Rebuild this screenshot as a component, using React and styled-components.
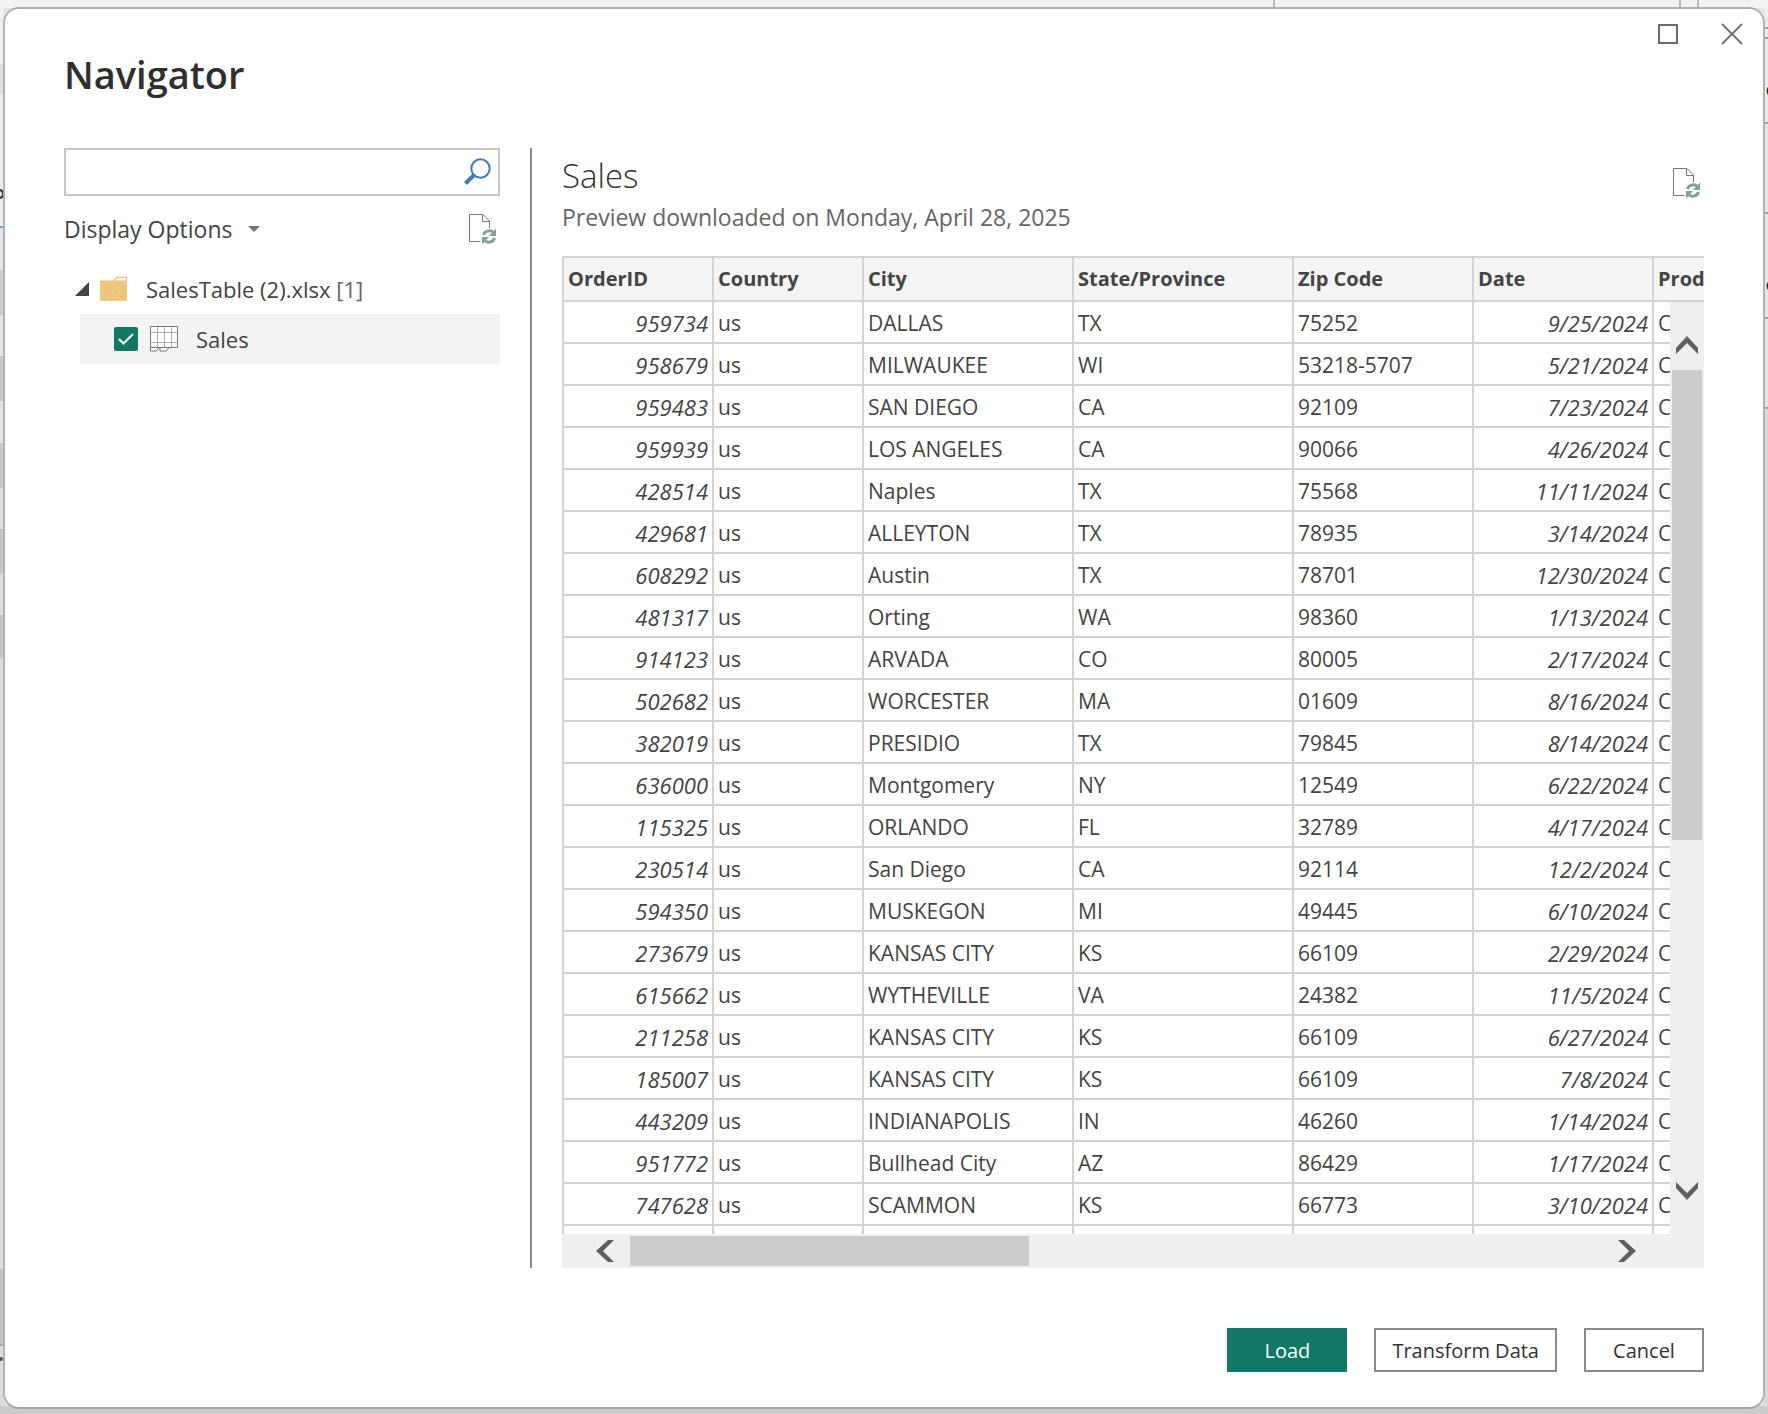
import React, { useState } from "react";
import styled, { createGlobalStyle } from "styled-components";

const GlobalStyle = createGlobalStyle`
  *, *::before, *::after { box-sizing: border-box; }
  body {
    margin: 0;
    background: #e4e4e4;
    color: #444444;
    font-family: "Open Sans", "Noto Sans", sans-serif;
    font-size: 22px;
    line-height: 30px;
  }
  button, input { font: inherit; color: inherit; }
`;

const Page = styled.div`
  position: relative;
  min-height: 100vh;
  display: flex;
  padding: 7px 3px 5px;
  overflow: hidden;
`;

/* The window behind the dialog, seen only as a thin rim */
const Backdrop = styled.div`
  position: absolute;
  inset: 0;
  display: flex;
  flex-direction: column;
`;

const TopRim = styled.div`
  display: flex;
  justify-content: flex-end;
  height: 8px;
  background: #f3f3f3;
`;

const RimCell = styled.div`
  width: ${(p) => p.$width}px;
  border-left: 2px solid #b8b8b8;
`;

const SideRims = styled.div`
  flex: 1;
  display: flex;
  justify-content: space-between;
`;

const LeftRim = styled.div`
  width: 4px;
  background: linear-gradient(
    #efefef 56px, #e0e0e0 56px 86px, #ececec 86px 218px, #6aa5dc 218px 220px,
    #e6e6e6 220px 262px, #cccccc 262px 307px, #e4e4e4 307px 348px,
    #c9c9c9 348px 393px, #e2e2e2 393px 435px, #c8c8c8 435px 480px,
    #e0e0e0 480px 521px, #c6c6c6 521px 566px, #dedede 566px 607px,
    #c6c6c6 607px 650px, #dcdcdc 650px 1261px, #c4c4c4 1261px 1336px,
    #a8a8a8 1336px 1338px, #dcdcdc 1338px
  );
`;

const RightRim = styled.div`
  width: 4px;
  background: linear-gradient(
    #ececec 19px, #a0a0a0 19px 21px, #ececec 21px 29px, #a0a0a0 29px 31px,
    #ebebeb 31px 114px, #a0a0a0 114px 116px, #e8e8e8 116px 204px,
    #a0a0a0 204px 206px, #e6e6e6 206px 309px, #a0a0a0 309px 311px,
    #e4e4e4 311px 399px, #a0a0a0 399px 401px, #d8d8d8 401px
  );
`;

const RimMarks = styled.svg`
  display: block;
`;

const BottomRim = styled.div`
  height: 8px;
  background: #cbcbcb;
`;

const Dialog = styled.main`
  position: relative;
  flex: 1;
  min-width: 0;
  display: flex;
  flex-direction: column;
  padding: 0 59px 35px;
  background: #ffffff;
  border: 2px solid #b2b2b2;
  border-bottom-color: #a6a6a6;
  border-radius: 16px;
`;

const TitleBar = styled.header`
  display: flex;
  justify-content: space-between;
  align-items: flex-start;
  height: 139px;
`;

const Title = styled.h1`
  margin: 0;
  padding-top: 37px;
  font-size: 38px;
  line-height: 56px;
  font-weight: 600;
  color: #2f2f2f;
`;

const WindowButtons = styled.div`
  display: flex;
  gap: 24px;
  margin: 5px -48px 0 0;
`;

const IconButton = styled.button`
  display: grid;
  place-items: center;
  flex: none;
  width: ${(p) => p.$size}px;
  height: ${(p) => p.$size}px;
  padding: 0;
  border: 0;
  background: transparent;
`;

const Content = styled.div`
  flex: 1;
  min-height: 0;
  display: grid;
  grid-template-columns: 436px 62px minmax(0, 1fr);
`;

const Sidebar = styled.nav`
  display: flex;
  flex-direction: column;
`;

const Divider = styled.div`
  width: 2px;
  margin-left: 30px;
  background: #8a8a8a;
`;

const SearchBox = styled.div`
  display: flex;
  align-items: center;
  height: 48px;
  padding-right: 4px;
  border: 2px solid #c6c6c6;
`;

const SearchInput = styled.input`
  flex: 1;
  min-width: 0;
  height: 100%;
  padding: 0 8px;
  border: 0;
  outline: 0;
  background: transparent;
`;

const OptionsRow = styled.div`
  display: flex;
  justify-content: space-between;
  align-items: center;
  height: 66px;
  padding-right: 1px;
`;

const OptionsButton = styled.button`
  display: flex;
  align-items: center;
  gap: 16px;
  padding: 0;
  border: 0;
  background: transparent;
  font-size: 23px;
`;

const Tree = styled.ul`
  margin: 0;
  padding: 0;
  list-style: none;
`;

const FolderRow = styled.div`
  display: flex;
  align-items: center;
  height: 52px;
  padding: 2px 0 0 11px;
`;

const FolderName = styled.span`
  margin-left: 18px;
`;

const Count = styled.span`
  color: #666666;
`;

const TableRow = styled.label`
  display: flex;
  align-items: center;
  height: 50px;
  margin-left: 16px;
  padding-left: 34px;
  background: #f3f3f3;
`;

const CheckWrap = styled.span`
  display: grid;
  place-items: center;
  width: 24px;
  height: 24px;
  margin-right: 12px;

  > * { grid-area: 1 / 1; }
  > svg { pointer-events: none; }
`;

const Check = styled.input`
  appearance: none;
  width: 24px;
  height: 24px;
  margin: 0;
  border: 2px solid #117865;
  border-radius: 2px;

  &:checked { background: #117865; }
`;

const TableName = styled.span`
  margin-left: 18px;
`;

const Preview = styled.section`
  display: flex;
  flex-direction: column;
  min-width: 0;
`;

const PreviewHead = styled.div`
  display: flex;
  justify-content: space-between;
  height: 108px;
  padding-top: 5px;
`;

const PreviewTitle = styled.h2`
  margin: 0;
  font-size: 33px;
  line-height: 46px;
  font-weight: 300;
  color: #333333;
`;

const PreviewNote = styled.p`
  margin: 0;
  font-size: 23px;
  line-height: 36px;
  color: #666666;
`;

const RefreshSlot = styled.div`
  padding: 14px 1px 0 0;
`;

const GridFrame = styled.div`
  flex: 1;
  min-height: 0;
  display: grid;
  grid-template-columns: minmax(0, 1fr) 34px;
  grid-template-rows: 46px minmax(0, 1fr) 34px;
`;

const TableClip = styled.div`
  grid-column: 1 / -1;
  grid-row: 1 / 3;
  overflow: hidden;
  height: 0;
  min-height: 100%;
`;

const DataTable = styled.table`
  width: 1272px;
  table-layout: fixed;
  border-spacing: 0;
  border-top: 2px solid #d3d3d3;
  border-left: 2px solid #d3d3d3;
  font-size: 21px;
  line-height: 28px;
`;

const HeadCell = styled.th`
  height: 44px;
  padding: 0 4px;
  border-right: 2px solid #d3d3d3;
  border-bottom: 2px solid #d3d3d3;
  background: #f4f4f4;
  text-align: left;
  font-size: 20px;
  font-weight: 700;
  white-space: nowrap;
`;

const Cell = styled.td`
  height: 42px;
  padding: 2px 4px 0;
  border-right: 2px solid #d3d3d3;
  border-bottom: 2px solid #d3d3d3;
  text-align: ${(p) => (p.$numeric ? "right" : "left")};
  font-style: ${(p) => (p.$numeric ? "italic" : "normal")};
  font-size: ${(p) => (p.$numeric ? 22 : 21)}px;
  white-space: nowrap;
`;

const VScroll = styled.div`
  grid-column: 2;
  grid-row: 2 / 4;
  position: relative;
  display: flex;
  flex-direction: column;
  align-items: center;
  padding: 30px 0 64px;
  background: #efefef;
`;

const HScroll = styled.div`
  grid-column: 1;
  grid-row: 3;
  position: relative;
  display: flex;
  align-items: center;
  padding: 0 30px;
  background: #efefef;
`;

const VTrack = styled.div`
  flex: 1;
  width: 30px;
  margin: 12px 0;
`;

const VThumb = styled.div`
  height: 59%;
  background: #cccccc;
`;

const HTrack = styled.div`
  flex: 1;
  height: 30px;
  margin: 0 12px;
`;

const HThumb = styled.div`
  width: 41%;
  height: 100%;
  background: #cccccc;
`;

const Actions = styled.footer`
  display: flex;
  justify-content: flex-end;
  gap: 27px;
  padding-top: 60px;
`;

const ActionButton = styled.button`
  min-width: 120px;
  height: 44px;
  padding: 2px 16px 0;
  border: 2px solid ${(p) => (p.$primary ? "#117865" : "#8a8a8a")};
  background: ${(p) => (p.$primary ? "#117865" : "#ffffff")};
  color: ${(p) => (p.$primary ? "#ffffff" : "#333333")};
  font-size: 20px;
  line-height: 28px;
  white-space: nowrap;
`;

const columns = [
  { name: "OrderID", width: 150, numeric: true },
  { name: "Country", width: 150 },
  { name: "City", width: 210 },
  { name: "State/Province", width: 220 },
  { name: "Zip Code", width: 180 },
  { name: "Date", width: 180, numeric: true },
  { name: "Prod", width: 180 },
];

const rows = [
  ["959734", "us", "DALLAS", "TX", "75252", "9/25/2024", "C"],
  ["958679", "us", "MILWAUKEE", "WI", "53218-5707", "5/21/2024", "C"],
  ["959483", "us", "SAN DIEGO", "CA", "92109", "7/23/2024", "C"],
  ["959939", "us", "LOS ANGELES", "CA", "90066", "4/26/2024", "C"],
  ["428514", "us", "Naples", "TX", "75568", "11/11/2024", "C"],
  ["429681", "us", "ALLEYTON", "TX", "78935", "3/14/2024", "C"],
  ["608292", "us", "Austin", "TX", "78701", "12/30/2024", "C"],
  ["481317", "us", "Orting", "WA", "98360", "1/13/2024", "C"],
  ["914123", "us", "ARVADA", "CO", "80005", "2/17/2024", "C"],
  ["502682", "us", "WORCESTER", "MA", "01609", "8/16/2024", "C"],
  ["382019", "us", "PRESIDIO", "TX", "79845", "8/14/2024", "C"],
  ["636000", "us", "Montgomery", "NY", "12549", "6/22/2024", "C"],
  ["115325", "us", "ORLANDO", "FL", "32789", "4/17/2024", "C"],
  ["230514", "us", "San Diego", "CA", "92114", "12/2/2024", "C"],
  ["594350", "us", "MUSKEGON", "MI", "49445", "6/10/2024", "C"],
  ["273679", "us", "KANSAS CITY", "KS", "66109", "2/29/2024", "C"],
  ["615662", "us", "WYTHEVILLE", "VA", "24382", "11/5/2024", "C"],
  ["211258", "us", "KANSAS CITY", "KS", "66109", "6/27/2024", "C"],
  ["185007", "us", "KANSAS CITY", "KS", "66109", "7/8/2024", "C"],
  ["443209", "us", "INDIANAPOLIS", "IN", "46260", "1/14/2024", "C"],
  ["951772", "us", "Bullhead City", "AZ", "86429", "1/17/2024", "C"],
  ["747628", "us", "SCAMMON", "KS", "66773", "3/10/2024", "C"],
  ["", "", "", "", "", "", ""],
];

const SearchIcon = () => (
  <svg width="30" height="30" viewBox="0 0 30 30" fill="none" stroke="#3f7cbd">
    <circle cx="17.500" cy="11.500" r="9.200" strokeWidth="2" />
    <path d="M11 18 2.500 26.500" strokeWidth="4" />
  </svg>
);

const RefreshIcon = () => (
  <svg width="30" height="32" viewBox="0 0 30 32" fill="none">
    <path d="M12.500 28.500H1.500V1.500H15L21.500 8V15" stroke="#777777" />
    <path d="M14.500 1.500V8.500H21.500" stroke="#777777" />
    <g stroke="#7fa39b" strokeWidth="3">
      <path d="M15.500 22A6 5.500 0 0 1 25 19" />
      <path d="M26.500 25A6 5.500 0 0 1 17 28" />
    </g>
    <path d="M28 15.500V23H21Z" fill="#7fa39b" />
    <path d="M14 31.500V24H21Z" fill="#7fa39b" />
  </svg>
);

const CaretIcon = () => (
  <svg width="12" height="6" viewBox="0 0 12 6">
    <path d="M0 0H12L6 6Z" fill="#737373" />
  </svg>
);

const FolderIcon = () => (
  <svg width="28" height="26" viewBox="0 0 28 26">
    <path d="M13.500 5 17 1.500H26.500V5" fill="#ffffff" stroke="#eac77c" strokeWidth="1.500" />
    <path d="M0 4.500H27V25H0Z" fill="#eec77d" />
    <g fill="#e0b263">
      <path d="M5 8h1v1H5zM12 10h1v1h-1zM19 8h1v1h-1zM24 12h1v1h-1zM8 14h1v1H8zM16 16h1v1h-1zM4 19h1v1H4zM11 21h1v1h-1zM21 20h1v1h-1z" />
    </g>
  </svg>
);

const TableIcon = () => (
  <svg width="28" height="26" viewBox="0 0 28 26" fill="none">
    <path d="M1 1H27V21H20L16 25H10V21H8L6 25H1Z" fill="#ffffff" />
    <path d="M7.500 1V21M14.500 1V21M21.500 1V21M1 6.500H27M1 16.500H27" stroke="#b0b0b0" />
    <path d="M.5 25V.5H27.500V21.500H.5M.5 25H6L9 22M10 22V25H16L19.500 21.500" stroke="#777777" />
  </svg>
);

const Chevron = ({ points, width, height }) => (
  <svg width={width} height={height} viewBox={`0 0 ${width} ${height}`}>
    <path d={points} fill="#606060" />
  </svg>
);

export default function App() {
  const [query, setQuery] = useState("");
  const [checked, setChecked] = useState(true);

  return (
    <Page>
      <GlobalStyle />
      <Backdrop aria-hidden="true">
        <TopRim>
          <RimCell $width={406} />
          <RimCell $width={18} />
          <RimCell $width={71}>
            <svg width="60" height="8" viewBox="0 0 60 8" fill="none" stroke="#222222" strokeWidth="2">
              <path d="M23 8 31 0M33 0Q40 4 47 0" />
            </svg>
          </RimCell>
        </TopRim>
        <SideRims>
          <LeftRim>
            <RimMarks width="4" height="1360" viewBox="0 0 4 1360" fill="none">
              <path d="M-1 182Q3 182 3 186T-1 190" stroke="#333333" strokeWidth="2" />
              <circle cx="1" cy="1351" r="2" fill="#55554d" />
            </RimMarks>
          </LeftRim>
          <RightRim>
            <RimMarks width="4" height="300" viewBox="0 0 4 300">
              <path d="M4 79Q1 82 4 87ZM4 274Q1 277 4 282Z" fill="#3a2a1a" />
            </RimMarks>
          </RightRim>
        </SideRims>
        <BottomRim />
      </Backdrop>

      <Dialog aria-labelledby="dialog-title">
        <TitleBar>
          <Title id="dialog-title">Navigator</Title>
          <WindowButtons>
            <IconButton type="button" $size={40} aria-label="Maximize">
              <svg width="20" height="20" viewBox="0 0 20 20" fill="none" stroke="#6f6b6b" strokeWidth="2">
                <path d="M1 1H19V19H1Z" />
              </svg>
            </IconButton>
            <IconButton type="button" $size={40} aria-label="Close">
              <svg width="22" height="22" viewBox="0 0 22 22" fill="none" stroke="#757575" strokeWidth="2">
                <path d="M1 1 21 21M21 1 1 21" />
              </svg>
            </IconButton>
          </WindowButtons>
        </TitleBar>

        <Content>
          <Sidebar aria-label="Data sources">
            <SearchBox>
              <SearchInput
                type="text"
                aria-label="Search"
                value={query}
                onChange={(e) => setQuery(e.target.value)}
              />
              <IconButton type="button" $size={32} aria-label="Search">
                <SearchIcon />
              </IconButton>
            </SearchBox>
            <OptionsRow>
              <OptionsButton type="button">
                Display Options
                <CaretIcon />
              </OptionsButton>
              <IconButton type="button" $size={32} aria-label="Refresh list">
                <RefreshIcon />
              </IconButton>
            </OptionsRow>
            <Tree>
              <li>
                <FolderRow>
                  <svg width="25" height="14" viewBox="0 0 25 14">
                    <path d="M0 14 14 0V14Z" fill="#444444" />
                  </svg>
                  <FolderIcon />
                  <FolderName>
                    SalesTable (2).xlsx <Count>[1]</Count>
                  </FolderName>
                </FolderRow>
                <Tree>
                  <li>
                    <TableRow>
                      <CheckWrap>
                        <Check
                          type="checkbox"
                          checked={checked}
                          onChange={(e) => setChecked(e.target.checked)}
                        />
                        <svg width="16" height="12" viewBox="0 0 16 12" fill="none" stroke="#ffffff" strokeWidth="2">
                          <path d="M1 6 5.500 10.500 15 1" />
                        </svg>
                      </CheckWrap>
                      <TableIcon />
                      <TableName>Sales</TableName>
                    </TableRow>
                  </li>
                </Tree>
              </li>
            </Tree>
          </Sidebar>

          <Divider />

          <Preview>
            <PreviewHead>
              <div>
                <PreviewTitle>Sales</PreviewTitle>
                <PreviewNote>Preview downloaded on Monday, April 28, 2025</PreviewNote>
              </div>
              <RefreshSlot>
                <IconButton type="button" $size={32} aria-label="Refresh preview">
                  <RefreshIcon />
                </IconButton>
              </RefreshSlot>
            </PreviewHead>
            <GridFrame>
              <TableClip>
                <DataTable>
                  <colgroup>
                    {columns.map((c) => (
                      <col key={c.name} width={c.width} />
                    ))}
                  </colgroup>
                  <thead>
                    <tr>
                      {columns.map((c) => (
                        <HeadCell key={c.name} scope="col">{c.name}</HeadCell>
                      ))}
                    </tr>
                  </thead>
                  <tbody>
                    {rows.map((row, r) => (
                      <tr key={r}>
                        {row.map((value, i) => (
                          <Cell key={columns[i].name} $numeric={columns[i].numeric}>{value}</Cell>
                        ))}
                      </tr>
                    ))}
                  </tbody>
                </DataTable>
              </TableClip>
              <VScroll>
                <IconButton type="button" $size={26} aria-label="Scroll up">
                  <Chevron width={22} height={18} points="M0 12 11 0 22 12V18L11 7 0 18Z" />
                </IconButton>
                <VTrack>
                  <VThumb />
                </VTrack>
                <IconButton type="button" $size={26} aria-label="Scroll down">
                  <Chevron width={22} height={18} points="M0 6 11 18 22 6V0L11 11 0 0Z" />
                </IconButton>
              </VScroll>
              <HScroll>
                <IconButton type="button" $size={26} aria-label="Scroll left">
                  <Chevron width={18} height={22} points="M12 0 0 11 12 22H18L7 11 18 0Z" />
                </IconButton>
                <HTrack>
                  <HThumb />
                </HTrack>
                <IconButton type="button" $size={26} aria-label="Scroll right">
                  <Chevron width={18} height={22} points="M6 0 18 11 6 22H0L11 11 0 0Z" />
                </IconButton>
              </HScroll>
            </GridFrame>
          </Preview>
        </Content>

        <Actions>
          <ActionButton type="button" $primary>Load</ActionButton>
          <ActionButton type="button">Transform Data</ActionButton>
          <ActionButton type="button">Cancel</ActionButton>
        </Actions>
      </Dialog>
    </Page>
  );
}
